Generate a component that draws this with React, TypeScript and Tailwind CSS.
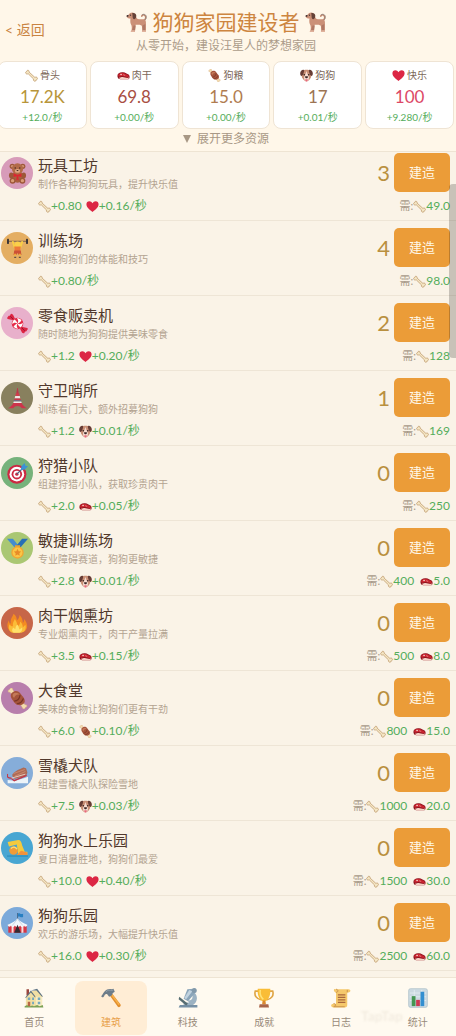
import type { ReactNode } from "react";

type IconName =
  | "bone" | "steak" | "kibble" | "face" | "heart" | "dog" | "teddy" | "lifter" | "candy" | "tower"
  | "target" | "medal" | "fire" | "sled" | "slide" | "tent" | "house" | "hammer" | "microscope"
  | "trophy" | "scroll" | "chart";

const drawings: Record<IconName, ReactNode> = {
  bone: (
    <g fill="#f4e6c4" stroke="#c39f72" strokeWidth="2" strokeLinejoin="round">
      <path d="M10 7.500C11 4 7.500 1.500 5 4c-.6.6-.8 1.200-.8 2C1.500 6.500.5 9.500 2.500 11.300c1.700 1.600 4 1.200 5.200.2L21 24.500c-1.200 3 .8 6 3.700 5.500 1.800-.3 2.800-1.700 2.800-3.300 2-.1 3.500-2 3-4.200-.7-2.700-4-3.500-6-1.600L10 7.500z" />
    </g>
  ),
  steak: (
    <g>
      <path d="M1 17C1 10 8 7 15 8c6 .5 7 3 11 4 4 1.200 5 4 5 8 0 3-2 5-5 5H9c-5 0-8-3-8-8z" fill="#8e1620" />
      <path d="M3 15C4 10 10 9 15 10c5 .8 6 3 10 4 3 .8 4 2 4 4 0 2-2 3-4 2.500-4-1-7-3-11-3-4 0-6 2-8 1.500-2-.5-3.500-2-3-4z" fill="#c9242f" />
      <path d="M5 21c3 1 5-1.500 9-1.500s7 2 12 2.500c1.500 0 3-.5 4-1.500 0 2.500-2 4.500-4 4.500H10c-2.500 0-5-1-5-4z" fill="#f6d0c4" />
      <circle cx="10" cy="13.500" r="2" fill="#f8ded6" />
      <path d="M15 13l6 2.500-4 .8z" fill="#f2b5ae" />
    </g>
  ),
  kibble: (
    <g>
      <path d="M5 .5c2-1 4 .2 4 2l3 5-4 3-3.500-4C2.500 7 .8 5.500 2 3.500c.4-.6 1-.8 1.500-.8zM27 31.500c-2 1-4-.2-4-2l-3-5 4-3 3.500 4c2-.5 3.700 1 2.500 3-.4.6-1 .8-1.500.8z" fill="#f3dcb0" stroke="#d2a878" strokeWidth=".8" />
      <path d="M8 7c4-4 10-3 13 2 3 4 7 7 6 12-1 4-6 6-10 5-4-1-6-4-8-7-3-3-5-9-1-12z" fill="#a5543b" />
      <path d="M9 9c3-3 8-2 10 1-4-1-7 1-8 5-2-1-3-4-2-6z" fill="#c47a58" />
      <path d="M11 20c4 0 8-3 9-9M15 24c4 0 8-3 10-8" fill="none" stroke="#793526" strokeWidth="1.800" />
    </g>
  ),
  face: (
    <g>
      <path d="M6 5c5-4 15-4 20 0 3 4 3 10 1 15-2 5-6 10-11 10S7 25 5 20C3 15 3 9 6 5z" fill="#c98f75" />
      <path d="M16 5c-2 5-2 8-5 12-2 3-1 8 1 11l4 2 4-2c2-3 3-8 1-11-3-4-3-7-5-12z" fill="#f7ddd2" />
      <path d="M9 2C5 1 1 5 .5 10c-.3 4 1 7 3 7 3 0 5-5 6-9 1-3 1-5-.5-6zM23 2c4-1 8 3 8.500 8 .3 4-1 7-3 7-3 0-5-5-6-9-1-3-1-5 .5-6z" fill="#673c34" />
      <circle cx="10.500" cy="14" r="2" fill="#33211f" />
      <circle cx="21.500" cy="14" r="2" fill="#33211f" />
      <path d="M12 19c1-1.500 7-1.500 8 0 0 2-2.500 4-4 4s-4-2-4-4z" fill="#3d2826" />
      <path d="M13 25h6c0 5-1 6-3 6s-3-1-3-6z" fill="#e76a7c" />
    </g>
  ),
  heart: <path d="M16 29.500C11 26 1 18.500 1 10.500 1 6 4.200 3 8.200 3c3.300 0 6.300 1.900 7.800 5 1.500-3.100 4.500-5 7.800-5C27.800 3 31 6 31 10.500c0 8-10 15.500-15 19z" fill="#dc2644" />,
  dog: (
    <g>
      <path d="M25 14c4-1 5-6 2-8-2-1-4 0-4 1.500" fill="none" stroke="#bd8166" strokeWidth="2.200" strokeLinecap="round" />
      <path d="M26 14c4-2 4.500-6.500 2-8.500-1.500-1-3-1-4.500 0" fill="none" stroke="#8d8b88" strokeWidth="1.200" />
      <path d="M6 3c3-2 7-1 8 3 1 4 2 6 5 6h6c3 0 4 2 4 5v11c0 1-1 1.500-2 1.500h-3l-1-8-3-1.500h-6L13 29c0 .8-.6 1-1.500 1H8c0-3 1-5 0-9-2-3-2-6-1.500-10C3.500 11 1 10 .8 7.500 1 6 3 6 4 5z" fill="#cb9077" />
      <path d="M11 21h3l-1 9H8zM24 21l4-2v11h-4z" fill="#b07864" />
      <path d="M9 3c3-1 6 1 6 4 0 2-1 5-3 5-3 0-2-5-3-9z" fill="#654238" />
      <path d="M.8 7c.4-1.500 2-1.500 2.700-1 .5 1 0 2.500-1.500 2.500-.8 0-1.300-.8-1.200-1.500z" fill="#3c3030" />
      <circle cx="6.500" cy="6" r="1" fill="#3c3030" />
      <path d="M8 28h5v2.500H6.500zM24 28h5v2.500h-6z" fill="#e0b29c" />
    </g>
  ),
  teddy: (
    <g>
      <circle cx="8" cy="5" r="4" fill="#9d5739" /><circle cx="24" cy="5" r="4" fill="#9d5739" />
      <circle cx="8" cy="5" r="2" fill="#cf9475" /><circle cx="24" cy="5" r="2" fill="#cf9475" />
      <ellipse cx="16" cy="21" rx="8.500" ry="9" fill="#a8603f" />
      <circle cx="16" cy="9" r="8.500" fill="#b26b48" />
      <ellipse cx="6.500" cy="19" rx="3.500" ry="4.500" fill="#9d5739" /><ellipse cx="25.500" cy="19" rx="3.500" ry="4.500" fill="#9d5739" />
      <circle cx="8.500" cy="27" r="4.500" fill="#9d5739" /><circle cx="23.500" cy="27" r="4.500" fill="#9d5739" />
      <circle cx="8.500" cy="27" r="2.500" fill="#db9c76" /><circle cx="23.500" cy="27" r="2.500" fill="#db9c76" />
      <ellipse cx="16" cy="12" rx="4" ry="3" fill="#e1ab86" />
      <path d="M14 10.500h4l-2 2z" fill="#412621" />
      <circle cx="12.500" cy="7.500" r="1.100" fill="#412621" /><circle cx="19.500" cy="7.500" r="1.100" fill="#412621" />
      <path d="M15 18l-5-2.500v6L15 20l-1 7 2-2 2 2-1-7 5 1.500v-6L17 18z" fill="#dc2630" />
    </g>
  ),
  lifter: (
    <g>
      <path d="M1 5h30" stroke="#62544b" strokeWidth="1.200" />
      <rect x="0" y="1" width="3" height="8" rx="1" fill="#3b3536" /><rect x="29" y="1" width="3" height="8" rx="1" fill="#3b3536" />
      <path d="M9 6l3 9M23 6l-3 9" stroke="#f9cf45" strokeWidth="3" strokeLinecap="round" />
      <path d="M12 9c0-5 8-5 9 0l-1 5h-7z" fill="#fbd04a" />
      <path d="M11 13h10l-1 9h-8z" fill="#ec7a3a" />
      <path d="M11 19h10l1 7h-4l-2-3-2 3h-4z" fill="#cd5135" />
      <path d="M11 24h3l-1 3h-2zM18 24h3v3h-2z" fill="#f5b33b" />
      <path d="M11 29.500h3M18 29.500h3" stroke="#604c42" strokeWidth="1.600" />
    </g>
  ),
  candy: (
    <g>
      <path d="M10 11L1 9c-2-2 1-3 1-4s1-1 2-1 1-3 3-3c2 1 2 1 3 3s2 3 2 5zM22 21l9 2c2 2-1 3-1 4s-1 1-2 1-1 3-3 3c-2-1-2-1-3-3s-2-3-2-5z" fill="#dd2543" />
      <path d="M5 5l5 5M27 27l-5-5" stroke="#8f1632" strokeWidth="1.400" />
      <circle cx="16" cy="16" r="8.800" fill="#e52c49" />
      <path d="M16 16c-4-2-6-1-8 1 0-3 1-5 3-7 2 1 4 3 5 6zm0 0c2-4 1-6-1-8 3 0 5 1 7 3-1 2-3 4-6 5zm0 0c4 2 6 1 8-1 0 3-1 5-3 7-2-1-4-3-5-6zm0 0c-2 4-1 6 1 8-3 0-5-1-7-3 1-2 3-4 6-5z" fill="#fff" />
    </g>
  ),
  tower: (
    <g>
      <path d="M15.500 0h1l1.500 9h-4z" fill="#bd344b" />
      <path d="M13.500 8h5l.8 5h-6.600z" fill="#cf3d4d" />
      <path d="M12.500 12h7l.8 4h-8.600z" fill="#efe5e3" />
      <path d="M11.500 16h9l1 4h-11z" fill="#ca344b" />
      <path d="M10.500 20h11l1 3h-13z" fill="#f2e8e5" />
      <path d="M9.500 23h13c1 3 4 6 8 8h-8c-2-5-11-5-13 0h-8c4-2 7-5 8-8z" fill="#cc344b" />
      <rect x="10" y="18.500" width="12" height="1.800" fill="#67758b" />
    </g>
  ),
  target: (
    <g>
      <circle cx="15" cy="17" r="14.500" fill="#cc2942" />
      <circle cx="15" cy="17" r="11.200" fill="#fff" />
      <circle cx="15" cy="17" r="8" fill="#cc2942" />
      <circle cx="15" cy="17" r="5.200" fill="#fff" />
      <circle cx="15" cy="17" r="2.500" fill="#cc2942" />
      <path d="M15 17L26 6" stroke="#446280" strokeWidth="1.800" />
      <path d="M21 11l1-6 5-5 1 4 4 1-5 5z" fill="#3a92d6" />
    </g>
  ),
  medal: (
    <g>
      <path d="M0 1h9l9 11-5 4z" fill="#438cd0" /><path d="M32 1h-9l-9 11 5 4z" fill="#276fb7" />
      <path d="M12 11h8v4h-8z" fill="#e6a52d" />
      <circle cx="16" cy="22" r="9.500" fill="#f2a530" /><circle cx="16" cy="22" r="7.500" fill="#fac647" />
      <path d="M16 16.500l1.700 3.500 3.800.5-2.700 2.700.6 3.800-3.400-1.800-3.400 1.800.6-3.800-2.700-2.700 3.800-.5z" fill="#e88b28" />
    </g>
  ),
  fire: (
    <g>
      <path d="M6 29C0 25-1 17 3 11c0 3 1 5 3 5C4 9 9 5 10 1c4 3 5 7 5 10 3-2 4-5 4-8 4 3 5 8 5 12 2-1 2-4 2-6 6 7 7 16-1 20z" fill="#f48b21" />
      <path d="M8 30c-6-3-6-9-4-13 2 3 4 4 5 3-1-5 2-8 3-11 3 5 4 8 4 11 3-1 4-4 4-7 4 4 4 7 4 9l4-4c2 6-1 11-6 12z" fill="#fbbc38" />
      <path d="M10 30c-3-2-3-6 0-8 1 2 2 2 3 2 0-3 1-5 3-6 2 3 2 5 3 7l4-3c1 4-1 7-4 8z" fill="#ffe06a" />
    </g>
  ),
  sled: (
    <g>
      <path d="M1 26l11 1 15-4 5-2v10H1z" fill="#ecf3f8" />
      <path d="M8 18c2-4 7-7 12-9l5-2 4 1 2 6c0 4-3 6-7 7l-12 3c-3-1-4-3-4-6z" fill="#ad6b55" />
      <path d="M10 16l17-6M12 20l16-7" stroke="#cf8b72" strokeWidth="1.300" />
      <path d="M1 17c-2 4 1 6 5 6l5 4 19-8" fill="none" stroke="#c43543" strokeWidth="2" />
      <path d="M7 23l21-6" stroke="#f3d6cc" strokeWidth="1.300" />
    </g>
  ),
  slide: (
    <g>
      <path d="M1 6l16-3c4 0 5 3 6 8l4 10h4v5H17L15 10 3 13z" fill="#f4ca3e" />
      <path d="M15 25c4-1 5-7 9-5l7 2v4H15z" fill="#f3913b" />
      <circle cx="10" cy="19" r="6.500" fill="#f09b38" />
      <path d="M6 16c3-3 7-3 9 1" fill="none" stroke="#fee274" strokeWidth="2" />
      <path d="M0 27.500h32" stroke="#2b8cbb" strokeWidth="1.800" />
    </g>
  ),
  tent: (
    <g>
      <path d="M16 0v10" stroke="#46617d" strokeWidth="1.300" /><path d="M16.500 1c3-2 4 2 8 0v5c-4 2-5-2-8 0z" fill="#287fc2" />
      <path d="M2 18h28v12H2z" fill="#d63744" />
      <path d="M7 19h3v11H7zM22 19h3v11h-3z" fill="#f2dfdf" />
      <path d="M16 8C13 13 7 15 1 18c0 3 4 4 5 1 1 3 5 3 6 0 1 3 7 3 8 0 1 3 5 3 6 0 1 3 5 2 5-1-6-3-12-5-15-10z" fill="#f2f7fb" />
      <path d="M15.500 10L8 19M16.500 10L24 19" stroke="#b7c6d4" strokeWidth="1" />
      <path d="M16 18l5 12H11z" fill="#342b32" />
    </g>
  ),
  house: (
    <g>
      <path d="M4 2h4v10H4z" fill="#9a463d" />
      <path d="M3 15L12 5l10-2 7 10v17H3z" fill="#f1dfa3" />
      <path d="M2 15L11 4l7 9v2.500L11 7l-8 9zM11 4l10-3 9 12-1 1.500L20 4z" fill="#5f7484" />
      <path d="M19 14h10v16H19z" fill="#f8ecc0" />
      <path d="M6 15h4v4H6zm7 0h3v4h-3zm9 0h4v4h-4zm0 7h4v4h-4zm-9 0h3v4h-3z" fill="#75a9bd" />
      <path d="M6 22h4v8H6z" fill="#b96545" />
      <path d="M1 29l4-2 2 2h3l3-1 3 1 5-2 4 2 5-2 1 4H1z" fill="#7ca155" />
    </g>
  ),
  hammer: (
    <g>
      <path d="M14 12l4-3 13 17c2 3-2 6-4 4z" fill="#e28e2d" />
      <path d="M16 11l2-1 12 16-2 1z" fill="#f8b24b" />
      <path d="M0 13c2-1 3-5 6-8 3-3 7-4 11-3l3-1 2 5-3 2-2 4-4 2-3-4c-2-1-4 0-5 3l-2 2z" fill="#6d7c89" />
      <path d="M8 6c3-3 6-3 9-2l3-1" stroke="#93a2ae" strokeWidth="1.400" fill="none" />
    </g>
  ),
  microscope: (
    <g>
      <path d="M3 27h28v4H1z" fill="#7690a5" />
      <path d="M15 20c8 1 10-6 7-10l5-2c6 7 3 16-3 19H9v-4h9z" fill="#9cb2c2" />
      <path d="M15 2l10-1 3 6-12 14-7-4z" fill="#8ba5b9" />
      <path d="M18 3l5 2-10 13-3-2z" fill="#c2d3df" />
      <circle cx="26" cy="4" r="4" fill="#8299aa" />
      <path d="M2 14l14 11-3 3L1 18z" fill="#586e72" />
    </g>
  ),
  trophy: (
    <g>
      <path d="M7 5H2C0 12 4 18 12 19M25 5h5c2 7-2 13-10 14" fill="none" stroke="#dfa443" strokeWidth="2.600" />
      <path d="M6 1h20c1 9-2 17-8 20v5h-4v-5C8 18 5 10 6 1z" fill="#f9bd36" />
      <path d="M10 3c-1 7 1 12 5 15" fill="none" stroke="#ffe276" strokeWidth="2.500" />
      <path d="M14 20h4l1 6h-6z" fill="#db8930" /><path d="M9 26h14l1 5H8z" fill="#a96448" />
    </g>
  ),
  scroll: (
    <g>
      <path d="M7 2h21c4 0 4 5 0 5h-2v20c0 2-1 4-4 4H4c-5 0-5-6 0-6h4V8L5 5C4 3 5 1 7 2z" fill="#f5c86b" />
      <path d="M8 2c4 0 4 5 0 5M4 25c5 0 4 5 1 4M26 7V3M4 30h18" fill="none" stroke="#c7904c" strokeWidth="1.500" />
      <path d="M11 11h12M11 15h12M11 19h12M11 23h12" stroke="#a9673d" strokeWidth="1.800" />
    </g>
  ),
  chart: (
    <g>
      <rect x="1" y="1" width="30" height="30" rx="3" fill="#cbd9e1" stroke="#a9bbc5" />
      <path d="M3 8h26M3 14h26M3 20h26M10 3v26M22 3v26" stroke="#e4edf1" strokeWidth="1.400" />
      <path d="M6 13h6v16H6z" fill="#459653" /><path d="M13 19h6v10h-6z" fill="#ce3954" /><path d="M20 6h6v23h-6z" fill="#328ed0" />
    </g>
  ),
};

function Icon({ name, className }: { name: IconName; className: string }) {
  return (
    <svg viewBox="0 0 32 32" aria-hidden="true" className={`shrink-0 ${className}`}>
      {drawings[name]}
    </svg>
  );
}

type Amount = { icon: IconName; value: string };

const resources: { icon: IconName; name: string; value: string; rate: string; color: string }[] = [
  { icon: "bone", name: "骨头", value: "17.2K", rate: "+12.0/秒", color: "text-[#b8953a]" },
  { icon: "steak", name: "肉干", value: "69.8", rate: "+0.00/秒", color: "text-[#a84e42]" },
  { icon: "kibble", name: "狗粮", value: "15.0", rate: "+0.00/秒", color: "text-[#b07c50]" },
  { icon: "face", name: "狗狗", value: "17", rate: "+0.01/秒", color: "text-[#9c7453]" },
  { icon: "heart", name: "快乐", value: "100", rate: "+9.280/秒", color: "text-[#dc4866]" },
];

type Building = {
  icon: IconName;
  tint: string;
  name: string;
  desc: string;
  gains: Amount[];
  count: number;
  costs: Amount[];
};

const b = (value: string): Amount => ({ icon: "bone", value });
const m = (value: string): Amount => ({ icon: "steak", value });

const buildings: Building[] = [
  { icon: "teddy", tint: "bg-[#d79bb9]", name: "玩具工坊", desc: "制作各种狗狗玩具，提升快乐值", gains: [b("+0.80"), { icon: "heart", value: "+0.16" }], count: 3, costs: [b("49.0")] },
  { icon: "lifter", tint: "bg-[#e4ae62]", name: "训练场", desc: "训练狗狗们的体能和技巧", gains: [b("+0.80")], count: 4, costs: [b("98.0")] },
  { icon: "candy", tint: "bg-[#e8b0cb]", name: "零食贩卖机", desc: "随时随地为狗狗提供美味零食", gains: [b("+1.2"), { icon: "heart", value: "+0.20" }], count: 2, costs: [b("128")] },
  { icon: "tower", tint: "bg-[#88805e]", name: "守卫哨所", desc: "训练看门犬，额外招募狗狗", gains: [b("+1.2"), { icon: "face", value: "+0.01" }], count: 1, costs: [b("169")] },
  { icon: "target", tint: "bg-[#76b27b]", name: "狩猎小队", desc: "组建狩猎小队，获取珍贵肉干", gains: [b("+2.0"), m("+0.05")], count: 0, costs: [b("250")] },
  { icon: "medal", tint: "bg-[#aac773]", name: "敏捷训练场", desc: "专业障碍赛道，狗狗更敏捷", gains: [b("+2.8"), { icon: "face", value: "+0.01" }], count: 0, costs: [b("400"), m("5.0")] },
  { icon: "fire", tint: "bg-[#c76648]", name: "肉干烟熏坊", desc: "专业烟熏肉干，肉干产量拉满", gains: [b("+3.5"), m("+0.15")], count: 0, costs: [b("500"), m("8.0")] },
  { icon: "kibble", tint: "bg-[#b87eac]", name: "大食堂", desc: "美味的食物让狗狗们更有干劲", gains: [b("+6.0"), { icon: "kibble", value: "+0.10" }], count: 0, costs: [b("800"), m("15.0")] },
  { icon: "sled", tint: "bg-[#86add9]", name: "雪橇犬队", desc: "组建雪橇犬队探险雪地", gains: [b("+7.5"), { icon: "face", value: "+0.03" }], count: 0, costs: [b("1000"), m("20.0")] },
  { icon: "slide", tint: "bg-[#48a6d2]", name: "狗狗水上乐园", desc: "夏日消暑胜地，狗狗们最爱", gains: [b("+10.0"), { icon: "heart", value: "+0.40" }], count: 0, costs: [b("1500"), m("30.0")] },
  { icon: "tent", tint: "bg-[#7caada]", name: "狗狗乐园", desc: "欢乐的游乐场，大幅提升快乐值", gains: [b("+16.0"), { icon: "heart", value: "+0.30" }], count: 0, costs: [b("2500"), m("60.0")] },
];

const tabs: { icon: IconName; label: string }[] = [
  { icon: "house", label: "首页" },
  { icon: "hammer", label: "建筑" },
  { icon: "microscope", label: "科技" },
  { icon: "trophy", label: "成就" },
  { icon: "scroll", label: "日志" },
  { icon: "chart", label: "统计" },
];

function Amounts({ items, suffix, gap }: { items: Amount[]; suffix?: string; gap: string }) {
  return (
    <span className={`flex text-[#55ad5b] ${gap}`}>
      {items.map((item, i) => (
        <span key={item.icon} className="flex items-center">
          <Icon name={item.icon} className="size-[13px]" />
          {item.value}
          {i === items.length - 1 ? suffix : null}
        </span>
      ))}
    </span>
  );
}

function BuildingRow({ item }: { item: Building }) {
  return (
    <li className="flex items-start gap-[5px] border-b border-[#eee5d6] pt-[7px] pr-1.5 pb-1.5 pl-px">
      <div className={`mt-1 flex size-8 shrink-0 items-center justify-center rounded-full ${item.tint}`}>
        <Icon name={item.icon} className="size-[21px]" />
      </div>
      <div className="min-w-0 flex-1 pt-0.5 whitespace-nowrap">
        <h2 className="text-[15px] leading-5 text-[#51382b]">{item.name}</h2>
        <p className="mt-px text-[10px] leading-4 text-[#b3a391]">{item.desc}</p>
        <div className="mt-1.5 text-xs leading-4">
          <Amounts items={item.gains} suffix="/秒" gap="gap-1" />
        </div>
      </div>
      <div className="flex shrink-0 flex-col items-end">
        <div className="flex items-center gap-1">
          <span className="text-[22px] leading-6 text-[#b9903f]">{item.count}</span>
          <button type="button" className="h-[39px] w-14 rounded-[5px] bg-[#eb9c38] text-[13px] text-[#fff8e8]">
            建造
          </button>
        </div>
        <div className="mt-1.5 flex items-center text-xs leading-4">
          <span className="text-[11px] text-[#a89a89]">需:</span>
          <Amounts items={item.costs} gap="gap-1.5" />
        </div>
      </div>
    </li>
  );
}

export default function App() {
  return (
    <div className="flex h-screen flex-col overflow-hidden bg-[#faf3e7] font-[Lato,'Noto_Sans_CJK_SC',sans-serif]">
      <header className="relative shrink-0 border-b border-[#eee4d3] bg-[#fff7e9] pt-2">
        <a href="#back" className="absolute top-5 left-[5px] text-sm leading-5 text-[#c98442]">
          &lt; 返回
        </a>
        <div className="mr-0.5 -ml-0.5">
          <h1 className="flex items-center justify-center gap-[5px] text-[21px] leading-7 text-[#cd853f]">
            <Icon name="dog" className="size-[22px]" />
            狗狗家园建设者
            <Icon name="dog" className="size-[22px]" />
          </h1>
          <p className="mt-0.5 text-center text-xs leading-4 text-[#ac9c8a]">从零开始，建设汪星人的梦想家园</p>
          <ul className="mt-[7px] grid grid-cols-5 gap-[3px]">
            {resources.map((r) => (
              <li key={r.name} className="flex h-[68px] flex-col items-center rounded-lg border border-[#efe4d4] bg-white pt-[5px]">
                <span className="flex items-center gap-0.5 text-[10px] leading-4 text-[#7c6858]">
                  <Icon name={r.icon} className="size-[13px]" />
                  {r.name}
                </span>
                <span className={`mt-0.5 text-[17px] leading-6 ${r.color}`}>{r.value}</span>
                <span className="text-[10px] leading-4 text-[#55ad5b]">{r.rate}</span>
              </li>
            ))}
          </ul>
          <button type="button" className="mb-[3px] flex w-full items-center justify-center gap-1.5 pt-px text-xs leading-[18px] text-[#a89885]">
            <svg viewBox="0 0 8 8" aria-hidden="true" className="size-2">
              <path d="M0 0h8L4 8z" fill="currentColor" />
            </svg>
            展开更多资源
          </button>
        </div>
      </header>

      <main className="relative min-h-0 flex-1">
        <div className="h-full overflow-y-auto [scrollbar-width:none]">
          <ul className="-mt-1.5">
            {buildings.map((item) => (
              <BuildingRow key={item.name} item={item} />
            ))}
          </ul>
        </div>
        <div className="absolute top-8 right-0 h-[174px] w-[7px] rounded-l-sm bg-black/20" />
      </main>

      <nav className="relative shrink-0 border-t border-[#eee4d3] bg-[#fffaf0] pt-[3px] pb-px">
        <span aria-hidden="true" className="absolute top-7 right-[53px] text-sm leading-5 font-bold text-[#8a7a60]/10 blur-[1px]">
          TapTap
        </span>
        <div className="relative mr-0.5 -ml-0.5 grid grid-cols-6 gap-1">
          {tabs.map((tab) => {
            const active = tab.label === "建筑";
            return (
              <button
                key={tab.label}
                type="button"
                aria-current={active ? "page" : undefined}
                className={`flex flex-col items-center gap-1.5 rounded-lg pt-[7px] pb-[5px] text-[10px] leading-4 ${
                  active ? "bg-[#ffedd5] text-[#e8a04a]" : "text-[#998a79]"
                }`}
              >
                <Icon name={tab.icon} className="size-5" />
                {tab.label}
              </button>
            );
          })}
        </div>
      </nav>
    </div>
  );
}
